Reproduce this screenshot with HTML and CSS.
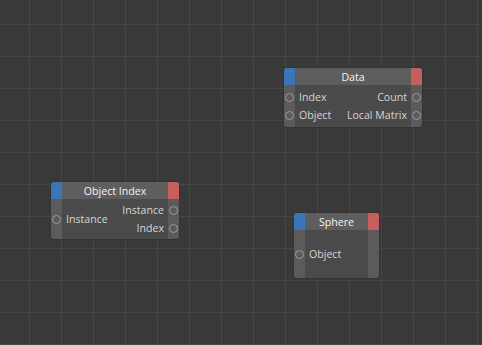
FILE: index.html
```html
<!DOCTYPE html>
<html>
<head>
<meta charset="utf-8">
<link rel="stylesheet" href="styles.css">
</head>
<body>
<div class="canvas">
  <div class="node node-data">
    <div class="head">
      <span class="cap cap-in"></span>
      <span class="title">Data</span>
      <span class="cap cap-out"></span>
    </div>
    <div class="body">
      <div class="col col-in">
        <div class="port"><span class="sock"></span><span class="lbl">Index</span></div>
        <div class="port"><span class="sock"></span><span class="lbl">Object</span></div>
      </div>
      <div class="col col-out">
        <div class="port"><span class="lbl">Count</span><span class="sock"></span></div>
        <div class="port"><span class="lbl">Local Matrix</span><span class="sock"></span></div>
      </div>
    </div>
  </div>

  <div class="node node-oi">
    <div class="head">
      <span class="cap cap-in"></span>
      <span class="title">Object Index</span>
      <span class="cap cap-out"></span>
    </div>
    <div class="body">
      <div class="col col-in">
        <div class="port"><span class="sock"></span><span class="lbl">Instance</span></div>
      </div>
      <div class="col col-out">
        <div class="port"><span class="lbl">Instance</span><span class="sock"></span></div>
        <div class="port"><span class="lbl">Index</span><span class="sock"></span></div>
      </div>
    </div>
  </div>

  <div class="node node-sphere">
    <div class="head">
      <span class="cap cap-in"></span>
      <span class="title">Sphere</span>
      <span class="cap cap-out"></span>
    </div>
    <div class="body">
      <div class="col col-in">
        <div class="port"><span class="sock"></span><span class="lbl">Object</span></div>
      </div>
      <div class="col col-out"></div>
    </div>
  </div>
</div>
</body>
</html>
```
FILE: styles.css
```css
html, body {
  margin: 0;
  padding: 0;
  width: 100%;
  height: 100%;
}
body {
  background-color: #393939;
  font-family: "Open Sans", "Noto Sans", sans-serif;
  font-size: 10.6px;
  color: #d6d6d6;
  overflow: hidden;
}
.canvas {
  position: relative;
  width: 482px;
  height: 345px;
  background-color: #393939;
  background-image:
    linear-gradient(to right, #464646 1px, transparent 1px),
    linear-gradient(to bottom, #464646 1px, transparent 1px);
  background-size: 32px 32px;
  background-position: 29px 24px;
}
.node {
  position: absolute;
  display: flex;
  flex-direction: column;
  border-radius: 3px;
  overflow: hidden;
  box-shadow: 0 0 0 1px rgba(40, 40, 40, 0.3);
}
.node-data { left: 284px; top: 68px; width: 138px; height: 59px; }
.node-oi { left: 51px; top: 182px; width: 128px; height: 57px; }
.node-sphere { left: 294px; top: 213px; width: 85px; height: 65px; }

.head {
  display: flex;
  height: 17px;
  background: #5e5e5e;
  flex: none;
}
.cap { width: 11px; flex: none; }
.cap-in { background: #3d73b7; }
.cap-out { background: #c75e5e; }
.title {
  flex: 1;
  text-align: center;
  line-height: 18px;
  color: #f4f4f4;
}
.body {
  flex: 1;
  display: flex;
  justify-content: space-between;
  background: linear-gradient(to right,
    #5b5b5b 0, #5b5b5b 11px,
    #4a4a4a 11px, #4a4a4a calc(100% - 11px),
    #5b5b5b calc(100% - 11px), #5b5b5b 100%);
}
.col {
  display: flex;
  flex-direction: column;
  justify-content: center;
}
.port {
  display: flex;
  align-items: center;
  height: 18px;
  gap: 5px;
}
.col-out .port { justify-content: flex-end; }
.sock {
  width: 7px;
  height: 7px;
  border: 1px solid #9a9a9a;
  border-radius: 50%;
  flex: none;
}
.col-in .sock { margin-left: 1px; }
.col-out .sock { margin-right: 1px; }
.lbl { white-space: nowrap; line-height: 18px; }
```
